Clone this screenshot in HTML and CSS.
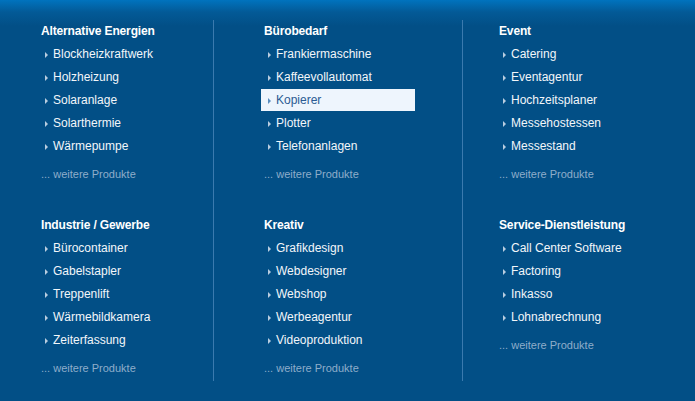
FILE: index.html
```html
<!DOCTYPE html>
<html lang="de">
<head>
<meta charset="utf-8">
<title>Produkte</title>
<link rel="stylesheet" href="styles.css">
</head>
<body>
<div class="page">
  <div class="col col-1">
    <div class="group">
      <h3 class="heading">Alternative Energien</h3>
      <ul class="list">
        <li class="item"><span class="arrow"></span>Blockheizkraftwerk</li>
        <li class="item"><span class="arrow"></span>Holzheizung</li>
        <li class="item"><span class="arrow"></span>Solaranlage</li>
        <li class="item"><span class="arrow"></span>Solarthermie</li>
        <li class="item"><span class="arrow"></span>Wärmepumpe</li>
      </ul>
      <div class="more">... weitere Produkte</div>
    </div>
    <div class="group group-2">
      <h3 class="heading">Industrie / Gewerbe</h3>
      <ul class="list">
        <li class="item"><span class="arrow"></span>Bürocontainer</li>
        <li class="item"><span class="arrow"></span>Gabelstapler</li>
        <li class="item"><span class="arrow"></span>Treppenlift</li>
        <li class="item"><span class="arrow"></span>Wärmebildkamera</li>
        <li class="item"><span class="arrow"></span>Zeiterfassung</li>
      </ul>
      <div class="more">... weitere Produkte</div>
    </div>
  </div>
  <div class="col col-2">
    <div class="group">
      <h3 class="heading">Bürobedarf</h3>
      <ul class="list">
        <li class="item"><span class="arrow"></span>Frankiermaschine</li>
        <li class="item"><span class="arrow"></span>Kaffeevollautomat</li>
        <li class="item active"><span class="arrow"></span>Kopierer</li>
        <li class="item"><span class="arrow"></span>Plotter</li>
        <li class="item"><span class="arrow"></span>Telefonanlagen</li>
      </ul>
      <div class="more">... weitere Produkte</div>
    </div>
    <div class="group group-2">
      <h3 class="heading">Kreativ</h3>
      <ul class="list">
        <li class="item"><span class="arrow"></span>Grafikdesign</li>
        <li class="item"><span class="arrow"></span>Webdesigner</li>
        <li class="item"><span class="arrow"></span>Webshop</li>
        <li class="item"><span class="arrow"></span>Werbeagentur</li>
        <li class="item"><span class="arrow"></span>Videoproduktion</li>
      </ul>
      <div class="more">... weitere Produkte</div>
    </div>
  </div>
  <div class="col col-3">
    <div class="group">
      <h3 class="heading">Event</h3>
      <ul class="list">
        <li class="item"><span class="arrow"></span>Catering</li>
        <li class="item"><span class="arrow"></span>Eventagentur</li>
        <li class="item"><span class="arrow"></span>Hochzeitsplaner</li>
        <li class="item"><span class="arrow"></span>Messehostessen</li>
        <li class="item"><span class="arrow"></span>Messestand</li>
      </ul>
      <div class="more">... weitere Produkte</div>
    </div>
    <div class="group group-2">
      <h3 class="heading">Service-Dienstleistung</h3>
      <ul class="list">
        <li class="item"><span class="arrow"></span>Call Center Software</li>
        <li class="item"><span class="arrow"></span>Factoring</li>
        <li class="item"><span class="arrow"></span>Inkasso</li>
        <li class="item"><span class="arrow"></span>Lohnabrechnung</li>
      </ul>
      <div class="more">... weitere Produkte</div>
    </div>
  </div>
</div>
</body>
</html>
```
FILE: styles.css
```css
html, body {
  margin: 0;
  padding: 0;
}
body {
  width: 695px;
  height: 401px;
  overflow: hidden;
  background: linear-gradient(to bottom, #0073be 0px, #035a97 12px, #024f86 26px, #024f86 100%);
  font-family: "Liberation Sans", Arial, sans-serif;
  color: #ffffff;
}
.page {
  display: grid;
  grid-template-columns: 213px 249px 1fr;
  padding-top: 20px;
}
.col {
  height: 361px;
  padding-top: 3px;
  box-sizing: border-box;
}
.col-1 { padding-left: 41px; }
.col-2 { padding-left: 50px; border-left: 1px solid #3b7aae; }
.col-3 { padding-left: 36px; border-left: 1px solid #3b7aae; }
.group-2 { margin-top: 35px; }
.heading {
  margin: 0 0 3px;
  font-size: 12px;
  font-weight: bold;
  line-height: 17px;
  letter-spacing: -0.15px;
  color: #ffffff;
}
.list {
  list-style: none;
  margin: 0 0 0 -3px;
  padding: 0;
  display: flex;
  flex-direction: column;
  gap: 1px;
}
.item {
  display: flex;
  align-items: center;
  width: 154px;
  height: 22px;
  padding-left: 7px;
  box-sizing: border-box;
  font-size: 12px;
  color: #f2f6fa;
  white-space: nowrap;
}
.arrow {
  width: 0;
  height: 0;
  border-top: 3px solid transparent;
  border-bottom: 3px solid transparent;
  border-left: 3px solid #b9cde0;
  margin-right: 5px;
  margin-top: 1px;
}
.item.active {
  background: #eef5fd;
  color: #2b5b93;
}
.item.active .arrow {
  border-left-color: #5a8dbf;
}
.more {
  margin-top: 10px;
  font-size: 11px;
  line-height: 15px;
  color: #8eadca;
}
```
